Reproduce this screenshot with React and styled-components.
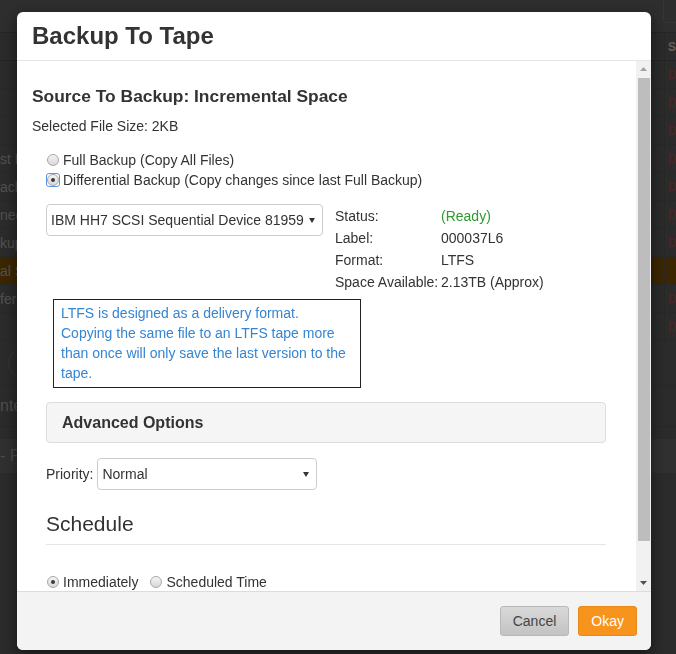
import React from 'react';
import styled, { createGlobalStyle } from 'styled-components';

const GlobalStyle = createGlobalStyle`
  html, body {
    margin: 0;
    padding: 0;
  }
  body {
    font-family: "Liberation Sans", Arial, Helvetica, sans-serif;
    color: #333;
    overflow: hidden;
  }
`;

const jobs = [
  { name: '', status: 'D' },
  { name: '', status: 'D' },
  { name: '', status: 'D' },
  { name: 'st Backup', status: 'D' },
  { name: 'ackup Job', status: 'D' },
  { name: 'ned Set', status: 'D' },
  { name: 'kup Files', status: 'D' },
  { name: 'al Space', status: '', active: true },
  { name: 'fer Tape', status: 'D' },
  { name: '', status: 'D' },
];

/* page behind the dialog */

const Page = styled.div`
  width: 676px;
  height: 654px;
  display: flex;
  flex-direction: column;
  background: #565656;
  font-size: 14px;
  color: #a8a8a8;
  overflow: hidden;
`;

const TopBar = styled.div`
  height: 32px;
  flex: none;
  display: flex;
  justify-content: flex-end;
  align-items: flex-start;
  border-bottom: 1px solid #4a4a4a;
  background: #5c5c5c;
`;

const TopTool = styled.div`
  width: 12px;
  height: 22px;
  border: 1px solid #6a6a6a;
  border-top: none;
  border-right: none;
  border-radius: 0 0 0 4px;
`;

const Row = styled.div`
  display: grid;
  grid-template-columns: 1fr 12px;
  height: 28px;
  flex: none;
  line-height: 28px;
  border-bottom: 1px solid ${(p) => (p.$head ? '#4a4a4a' : '#505050')};
  background: ${(p) => (p.$active ? '#764c00' : 'transparent')};
  box-sizing: border-box;
`;

const Cell = styled.div`
  white-space: nowrap;
  overflow: hidden;
  color: ${(p) => (p.$head ? '#c0c0c0' : '#a0a0a0')};
  font-weight: ${(p) => (p.$head ? 700 : 400)};
`;

const StatusCell = styled(Cell)`
  padding-left: 3px;
  font-size: 12px;
  border-left: 1px solid #505050;
  color: ${(p) => (p.$head ? '#c0c0c0' : '#b04646')};
`;

const Pager = styled.div`
  height: 44px;
  flex: none;
  display: flex;
  align-items: center;
  border-bottom: 1px solid #4e4e4e;
  padding-left: 8px;
`;

const PagerDot = styled.div`
  width: 26px;
  height: 26px;
  border-radius: 50%;
  border: 1px solid #6a6a6a;
`;

const InfoLine = styled.div`
  height: 40px;
  flex: none;
  line-height: 40px;
  border-bottom: 1px solid #4e4e4e;
  color: #9a9a9a;
  font-size: 16px;
`;

const ActionBar = styled.div`
  height: 34px;
  flex: none;
  margin-top: 12px;
  line-height: 34px;
  background: #606060;
  color: #9a9a9a;
  font-size: 16px;
`;

const Backdrop = styled.div`
  position: fixed;
  inset: 0;
  background: rgba(0, 0, 0, 0.5);
`;

/* dialog */

const Modal = styled.div`
  position: fixed;
  top: 12px;
  left: 17px;
  width: 634px;
  height: 638px;
  display: flex;
  flex-direction: column;
  background: #fff;
  border-radius: 6px;
  overflow: hidden;
  box-shadow: 0 4px 14px rgba(0, 0, 0, 0.5);
  font-size: 14px;
  color: #333;
`;

const Header = styled.div`
  height: 48px;
  flex: none;
  display: flex;
  align-items: center;
  padding: 0 15px;
  border-bottom: 1px solid #e5e5e5;
`;

const Title = styled.h3`
  margin: 0;
  font-size: 24px;
  font-weight: 700;
  line-height: 26px;
  color: #333;
`;

const Body = styled.div`
  flex: 1;
  min-height: 0;
  display: flex;
`;

const Content = styled.div`
  flex: 1;
  overflow: hidden;
  padding: 15px 15px 40px;
`;

const ScrollBar = styled.div`
  width: 15px;
  flex: none;
  display: flex;
  flex-direction: column;
  background: #f1f1f1;
`;

const ScrollButton = styled.div`
  height: 16px;
  flex: none;
  display: flex;
  align-items: center;
  justify-content: center;
  color: ${(p) => (p.$disabled ? '#a3a3a3' : '#505050')};
`;

const Track = styled.div`
  flex: 1;
  padding: 1px 1px 0 2px;
`;

const Thumb = styled.div`
  height: 463px;
  background: #bdbdbd;
`;

const SectionTitle = styled.h4`
  margin: 10px 0 0;
  font-size: 17.4px;
  font-weight: 700;
  line-height: 20px;
`;

const Line = styled.div`
  margin-top: ${(p) => p.$top || 0}px;
  line-height: 20px;
`;

const Indent = styled.div`
  padding: 0 15px 0 14px;
`;

const RadioGroup = styled.div`
  margin-top: ${(p) => p.$top || 14}px;
  padding-left: 1px;
  display: flex;
  flex-direction: ${(p) => (p.$inline ? 'row' : 'column')};
  gap: ${(p) => (p.$inline ? '12px' : '0')};
`;

const RadioLabel = styled.label`
  display: flex;
  align-items: center;
  line-height: 20px;
`;

const RadioDot = styled.span`
  position: relative;
  width: 10px;
  height: 10px;
  margin-right: 4px;
  border-radius: 50%;
  border: 1px solid #a8a8a8;
  background: linear-gradient(#f4f4f4, #d8d8d8);
  display: flex;
  align-items: center;
  justify-content: center;
  &::before {
    content: '';
    width: 4px;
    height: 4px;
    border-radius: 50%;
    background: ${(p) => (p.$checked ? '#3a3a3a' : 'transparent')};
  }
  &::after {
    content: '';
    display: ${(p) => (p.$focused ? 'block' : 'none')};
    position: absolute;
    inset: -2px;
    border: 1px solid #5b95e3;
    border-radius: 3px;
  }
`;

const DeviceRow = styled.div`
  margin-top: 14px;
  display: flex;
  align-items: flex-start;
  gap: 12px;
`;

const Select = styled.div`
  width: ${(p) => p.$width}px;
  height: 32px;
  box-sizing: border-box;
  display: flex;
  align-items: center;
  justify-content: space-between;
  padding: 0 7px 0 4px;
  border: 1px solid #ccc;
  border-radius: 4px;
  background: #fff;
  color: #333;
  white-space: nowrap;
`;

const StatusGrid = styled.dl`
  margin: 1px 0 0;
  display: grid;
  grid-template-columns: 106px auto;
  line-height: 22px;
  dt, dd {
    margin: 0;
  }
`;

const StatusValue = styled.dd`
  color: ${(p) => p.$color || '#333'};
`;

const Note = styled.div`
  margin: 6px 0 0 7px;
  width: 292px;
  padding: 3px 7px 4px;
  border: 1px solid #222;
  color: #3585d2;
  line-height: 20px;
`;

const Panel = styled.div`
  margin-top: 14px;
  height: 41px;
  box-sizing: border-box;
  display: flex;
  align-items: center;
  padding: 0 15px;
  background: #f5f5f5;
  border: 1px solid #dddddd;
  border-radius: 4px;
  font-size: 16px;
  font-weight: 700;
  color: #333;
`;

const PriorityRow = styled.div`
  margin-top: 15px;
  display: flex;
  align-items: center;
  gap: 4px;
`;

const ScheduleTitle = styled.h3`
  margin: 22px 0 0;
  font-size: 21px;
  font-weight: 400;
  line-height: 24px;
  color: #333;
`;

const Rule = styled.hr`
  margin: 8px 0 0;
  border: none;
  border-top: 1px solid #e5e5e5;
`;

const Footer = styled.div`
  height: 58px;
  flex: none;
  display: flex;
  align-items: center;
  justify-content: flex-end;
  gap: 9px;
  padding: 0 14px;
  border-top: 1px solid #dcdcdc;
  background: #f3f3f3;
`;

const Button = styled.button`
  height: 30px;
  padding: 0 12px;
  font-family: inherit;
  font-size: 14px;
  border-radius: 3px;
  border: 1px solid ${(p) => (p.$primary ? '#e8891b' : '#b8b8b8')};
  background: ${(p) =>
    p.$primary ? '#f7941e' : 'linear-gradient(#d9d9d9, #c3c3c3)'};
  color: ${(p) => (p.$primary ? '#fff' : '#444')};
`;

function Caret() {
  return (
    <svg width="6" height="5" viewBox="0 0 6 5">
      <path d="M0 0h6L3 5z" fill="#333" />
    </svg>
  );
}

function Arrow({ up }) {
  return (
    <svg width="7" height="4" viewBox="0 0 7 4">
      <path d={up ? 'M0 4h7L3.5 0z' : 'M0 0h7L3.5 4z'} fill="currentColor" />
    </svg>
  );
}

function Radio({ checked, focused, children }) {
  return (
    <RadioLabel>
      <RadioDot $checked={checked} $focused={focused} />
      {children}
    </RadioLabel>
  );
}

function BackgroundPage() {
  return (
    <Page>
      <TopBar>
        <TopTool />
      </TopBar>
      <Row $head>
        <Cell $head />
        <StatusCell $head>S</StatusCell>
      </Row>
      {jobs.map((job, i) => (
        <Row key={i} $active={job.active}>
          <Cell>{job.name}</Cell>
          <StatusCell>{job.status}</StatusCell>
        </Row>
      ))}
      <Pager>
        <PagerDot />
      </Pager>
      <InfoLine>nternet</InfoLine>
      <ActionBar>- Priority</ActionBar>
    </Page>
  );
}

export default function App() {
  return (
    <>
      <GlobalStyle />
      <BackgroundPage />
      <Backdrop />
      <Modal>
        <Header>
          <Title>Backup To Tape</Title>
        </Header>
        <Body>
          <Content>
            <SectionTitle>Source To Backup: Incremental Space</SectionTitle>
            <Line $top={10}>Selected File Size: 2KB</Line>
            <Indent>
              <RadioGroup>
                <Radio>Full Backup (Copy All Files)</Radio>
                <Radio checked focused>
                  Differential Backup (Copy changes since last Full Backup)
                </Radio>
              </RadioGroup>
              <DeviceRow>
                <Select $width={277}>
                  IBM HH7 SCSI Sequential Device 81959
                  <Caret />
                </Select>
                <StatusGrid>
                  <dt>Status:</dt>
                  <StatusValue $color="#2e9a2e">(Ready)</StatusValue>
                  <dt>Label:</dt>
                  <StatusValue>000037L6</StatusValue>
                  <dt>Format:</dt>
                  <StatusValue>LTFS</StatusValue>
                  <dt>Space Available:</dt>
                  <StatusValue>2.13TB (Approx)</StatusValue>
                </StatusGrid>
              </DeviceRow>
              <Note>
                LTFS is designed as a delivery format.
                <br />
                Copying the same file to an LTFS tape more than once will only
                save the last version to the tape.
              </Note>
              <Panel>Advanced Options</Panel>
              <PriorityRow>
                Priority:
                <Select $width={220}>
                  Normal
                  <Caret />
                </Select>
              </PriorityRow>
              <ScheduleTitle>Schedule</ScheduleTitle>
              <Rule />
              <RadioGroup $inline $top={27}>
                <Radio checked>Immediately</Radio>
                <Radio>Scheduled Time</Radio>
              </RadioGroup>
            </Indent>
          </Content>
          <ScrollBar>
            <ScrollButton $disabled>
              <Arrow up />
            </ScrollButton>
            <Track>
              <Thumb />
            </Track>
            <ScrollButton>
              <Arrow />
            </ScrollButton>
          </ScrollBar>
        </Body>
        <Footer>
          <Button>Cancel</Button>
          <Button $primary>Okay</Button>
        </Footer>
      </Modal>
    </>
  );
}
